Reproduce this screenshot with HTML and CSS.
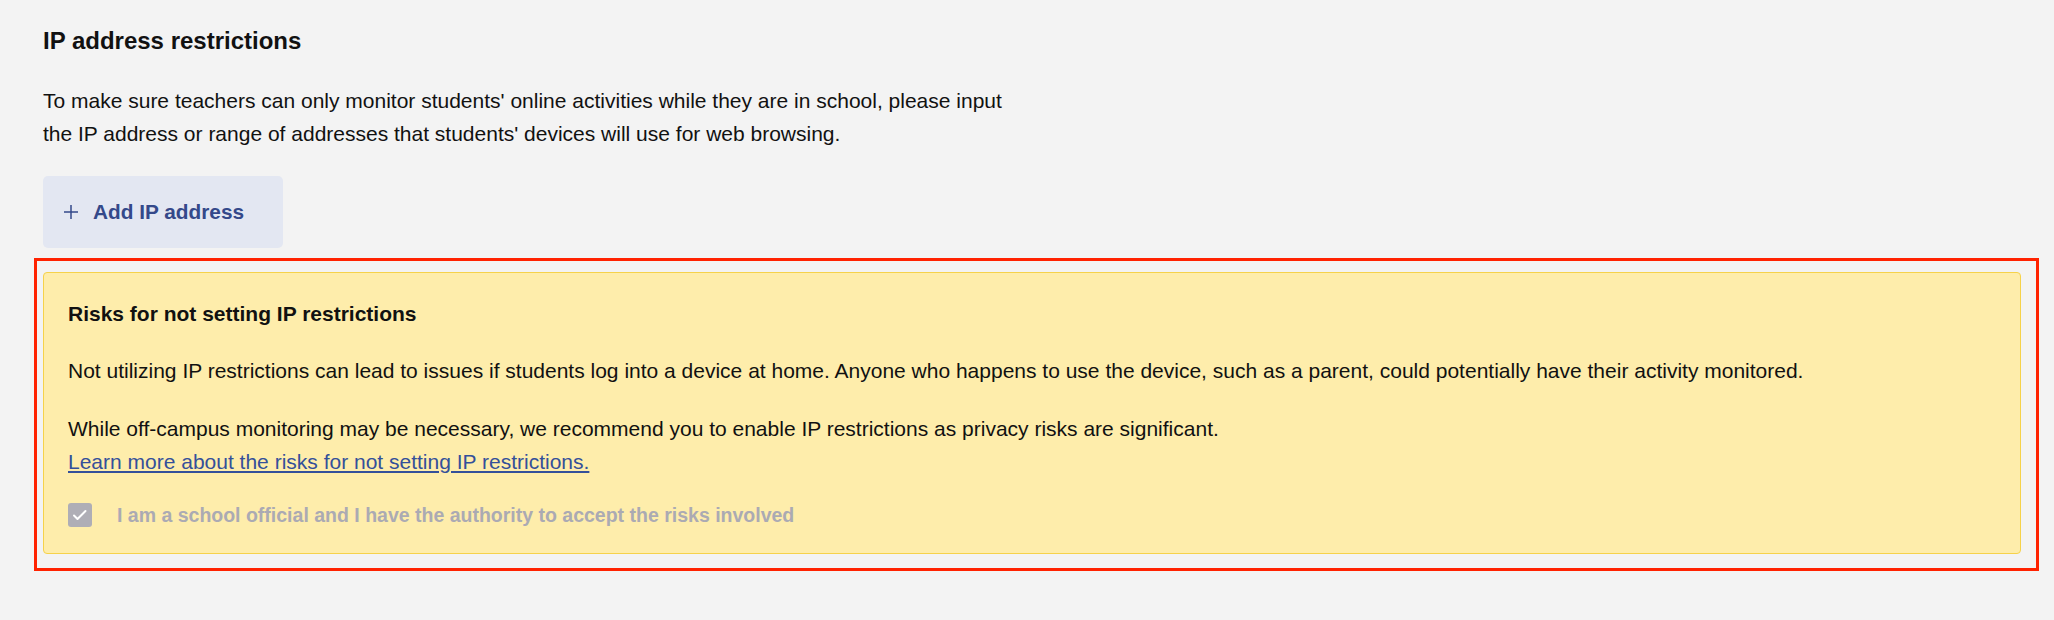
FILE: index.html
```html
<!DOCTYPE html>
<html lang="en">
<head>
    <meta charset="UTF-8">
    <meta name="viewport" content="width=device-width, initial-scale=1.0">
    <title>IP address restrictions</title>
    <link rel="stylesheet" href="styles.css">
</head>
<body>

    <div class="settings">
        <h2 class="settings-title">IP address restrictions</h2>
        <p class="settings-text">To make sure teachers can only monitor students' online activities while they are in school, please input the IP address or range of addresses that students' devices will use for web browsing.</p>

        <button class="add-button" type="button">
            <svg class="add-icon" width="16" height="16" viewBox="0 0 16 16" aria-hidden="true">
                <path d="M8 1v14M1 8h14" stroke="currentColor" stroke-width="1.5" fill="none"/>
            </svg>
            <span>Add IP address</span>
        </button>
    </div>

    <!-- Aviso resaltado -->
    <div class="highlight">
        <div class="warning">
            <h3 class="warning-title">Risks for not setting IP restrictions</h3>
            <p class="warning-text">Not utilizing IP restrictions can lead to issues if students log into a device at home. Anyone who happens to use the device, such as a parent, could potentially have their activity monitored.</p>
            <p class="warning-text">While off-campus monitoring may be necessary, we recommend you to enable IP restrictions as privacy risks are significant.<br><a href="#" class="warning-link">Learn more about the risks for not setting IP restrictions.</a></p>

            <label class="accept">
                <span class="accept-box">
                    <svg width="24" height="24" viewBox="0 0 24 24" aria-hidden="true">
                        <path d="M6 12.5l3.5 3.5 8-8" stroke="#fff" stroke-width="2" fill="none" stroke-linecap="round" stroke-linejoin="round"/>
                    </svg>
                </span>
                <span class="accept-label">I am a school official and I have the authority to accept the risks involved</span>
            </label>
        </div>
    </div>

</body>
</html>
```

FILE: styles.css
```css
body {
    margin: 0;
    padding: 0;
    background-color: #f3f3f3;
    font-family: "Liberation Sans", Arial, Helvetica, sans-serif;
    color: #111;
}

.settings {
    padding: 26px 0 0 43px;
}

.settings-title {
    margin: 0;
    font-size: 24px;
    line-height: 30px;
    font-weight: bold;
}

.settings-text {
    margin: 28px 0 0;
    max-width: 975px;
    font-size: 21px;
    line-height: 33px;
}

.add-button {
    display: inline-flex;
    align-items: center;
    gap: 14px;
    height: 72px;
    margin-top: 26px;
    padding: 0 39px 0 20px;
    border: none;
    border-radius: 5px;
    background-color: #e3e7f2;
    color: #34498a;
    font-family: inherit;
    font-size: 20.8px;
    font-weight: bold;
    line-height: 24px;
    cursor: pointer;
}

.add-icon {
    display: block;
}

/* Marco rojo alrededor del aviso */
.highlight {
    margin: 10px 15px 0 34px;
    padding: 11px 15px 14px 6px;
    border: 3px solid #ff2200;
}

.warning {
    padding: 26px 24px 26px;
    border: 1px solid #f6d24a;
    border-radius: 4px;
    background-color: #feedab;
}

.warning-title {
    margin: 0;
    font-size: 21px;
    line-height: 30px;
    font-weight: bold;
}

.warning-text {
    margin: 25px 0 0;
    font-size: 21px;
    line-height: 33px;
}

.warning-link {
    color: #34509a;
    text-decoration-thickness: 2px;
    text-underline-offset: 2px;
}

.accept {
    display: flex;
    align-items: center;
    gap: 25px;
    margin-top: 25px;
}

.accept-box {
    width: 24px;
    height: 24px;
    border-radius: 3px;
    background-color: #afaeb6;
}

.accept-box svg {
    display: block;
}

.accept-label {
    color: #abaab3;
    font-size: 19.5px;
    font-weight: bold;
    line-height: 24px;
}
```
